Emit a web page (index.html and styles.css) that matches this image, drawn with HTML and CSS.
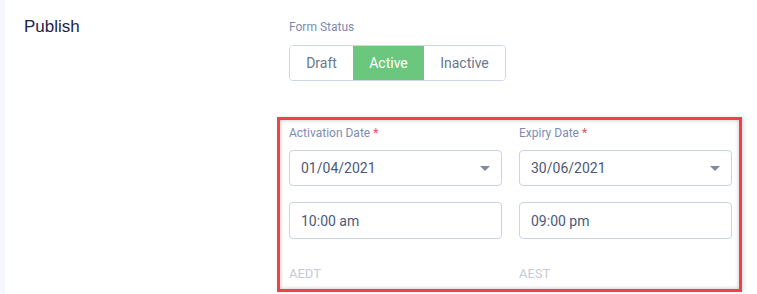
FILE: index.html
```html
<!DOCTYPE html>
<html lang="en">
<head>
    <meta charset="UTF-8">
    <meta name="viewport" content="width=device-width, initial-scale=1.0">
    <title>Publish</title>
    <link rel="stylesheet" href="styles.css">
</head>
<body>
    <div class="page">
        <div class="section-title">Publish</div>

        <div class="section-body">
            <div class="field-label">Form Status</div>
            <div class="status-group">
                <button class="status-btn status-draft">Draft</button>
                <button class="status-btn active">Active</button>
                <button class="status-btn status-inactive">Inactive</button>
            </div>

            <!-- Highlighted date range -->
            <div class="highlight-box">
                <div class="date-grid">
                    <div class="date-col">
                        <div class="field-label">Activation Date <span class="req">*</span></div>
                        <div class="select-box">
                            <span>01/04/2021</span>
                            <span class="caret"></span>
                        </div>
                        <div class="input-box">10:00 am</div>
                        <div class="tz">AEDT</div>
                    </div>
                    <div class="date-col">
                        <div class="field-label">Expiry Date <span class="req">*</span></div>
                        <div class="select-box">
                            <span>30/06/2021</span>
                            <span class="caret"></span>
                        </div>
                        <div class="input-box">09:00 pm</div>
                        <div class="tz">AEST</div>
                    </div>
                </div>
            </div>
        </div>
    </div>
</body>
</html>
```

FILE: styles.css
```css
* {
    margin: 0;
    padding: 0;
    box-sizing: border-box;
    font-family: 'Roboto', sans-serif;
}

body {
    background: white;
}

.page {
    display: flex;
    min-height: 294px;
    border-left: 5px solid #f4f8fe;
}

.section-title {
    width: 284px;
    padding: 17px 0 0 19px;
    font-family: 'Liberation Sans', Arial, sans-serif;
    font-size: 17px;
    color: #1d2447;
}

.section-body {
    padding-top: 19px;
}

.field-label {
    font-size: 12px;
    line-height: 16px;
    color: #7d8cb3;
}

.req {
    color: #e0555a;
}

.status-group {
    display: flex;
    margin-top: 10px;
    width: 217px;
    height: 36px;
    border: 1px solid #cdd6e4;
    border-radius: 4px;
    overflow: hidden;
}

.status-btn {
    border: none;
    background: white;
    font-size: 14px;
    color: #6b778e;
    cursor: pointer;
}

.status-draft {
    width: 63px;
}

.status-btn.active {
    width: 71px;
    background: #6cc77e;
    color: white;
}

.status-inactive {
    flex: 1;
}

/* Red outline round the dates */
.highlight-box {
    margin: 36px 0 0 -12px;
    width: 465px;
    height: 175px;
    padding: 5px 6px 6px 9px;
    border: 3px solid #f2404a;
    box-shadow: inset 0 0 4px rgba(0,0,0,0.25), 2px 0 4px rgba(0,0,0,0.12);
}

.date-grid {
    display: grid;
    grid-template-columns: 213px 213px;
    column-gap: 17px;
}

.select-box,
.input-box {
    display: flex;
    align-items: center;
    justify-content: space-between;
    padding: 0 11px;
    border: 1px solid #c9d4e4;
    border-radius: 4px;
    font-size: 14px;
    color: #4c5a78;
}

.select-box {
    height: 36px;
    margin-top: 9px;
}

.input-box {
    height: 37px;
    margin-top: 16px;
}

.caret {
    width: 0;
    height: 0;
    border-left: 5px solid transparent;
    border-right: 5px solid transparent;
    border-top: 5px solid #7e8aa6;
}

.tz {
    margin-top: 27px;
    font-size: 13px;
    line-height: 16px;
    color: #c6cad2;
}
```
